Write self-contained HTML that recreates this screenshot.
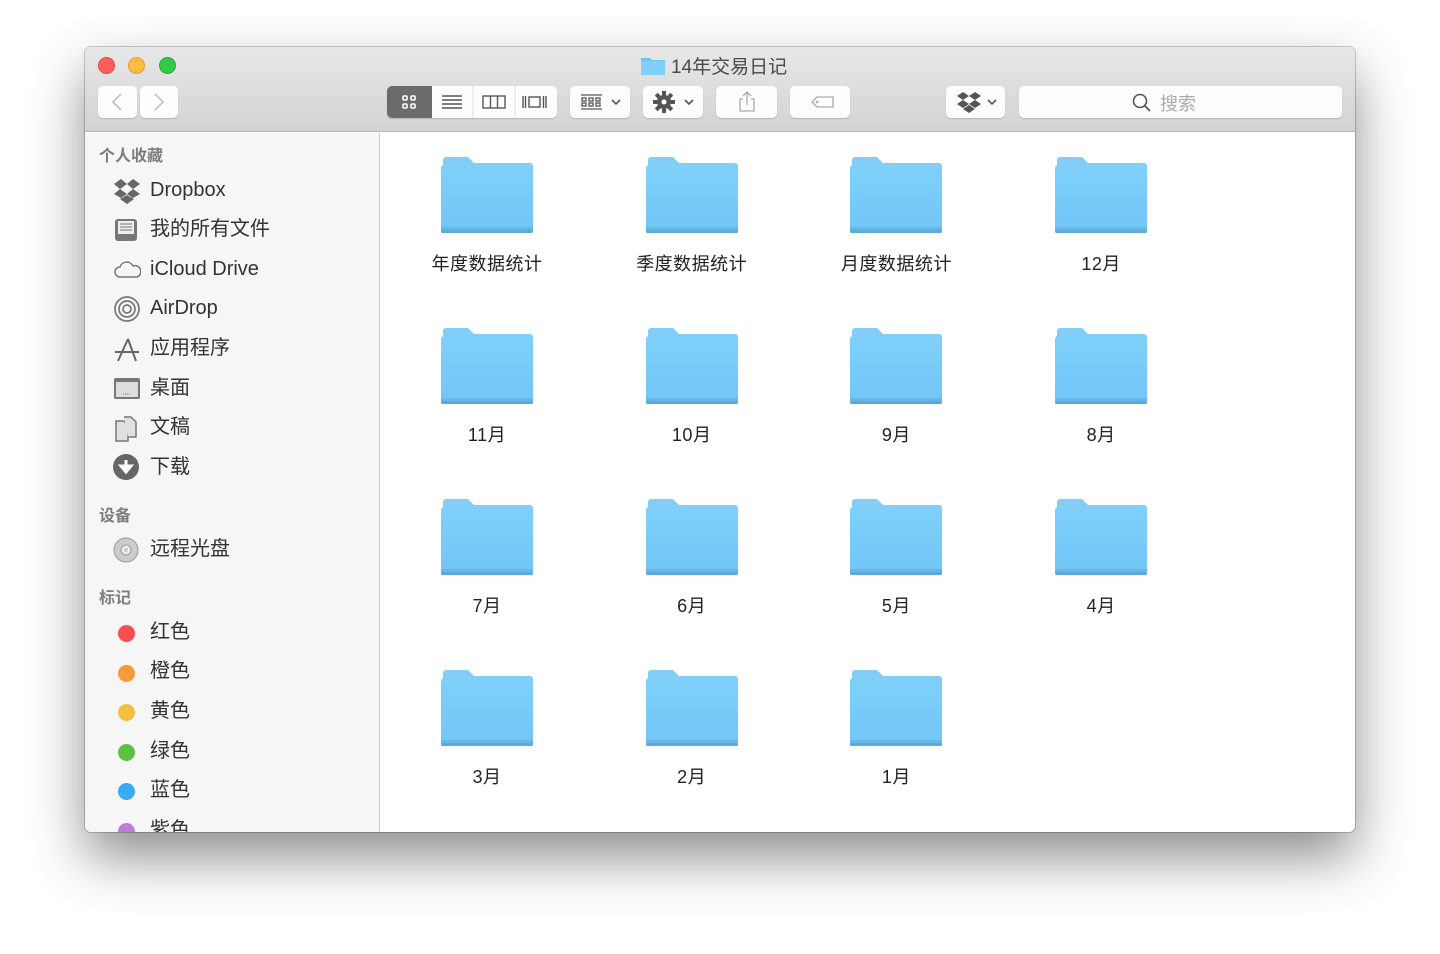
<!DOCTYPE html>
<html><head><meta charset="utf-8"><style>
*{margin:0;padding:0;box-sizing:border-box}
body{width:1440px;height:954px;background:#fff;position:relative;overflow:hidden;font-family:"Liberation Sans","Noto Sans CJK SC",sans-serif}
.win{position:absolute;left:85px;top:47px;width:1270px;height:785px;border-radius:6px;overflow:hidden;box-shadow:0 25px 55px rgba(0,0,0,.45),0 0 0 1px rgba(0,0,0,.2);background:#fff}
.tb{position:absolute;left:0;top:0;width:1270px;height:85px;background:linear-gradient(#e9e8e9,#d3d2d3);border-bottom:1px solid #b5b5b5}
.dot{position:absolute;top:10px;width:17px;height:17px;border-radius:50%}
.btn{position:absolute;top:39px;height:32px;background:#fdfdfd;border-radius:5px;box-shadow:0 1px 1px rgba(0,0,0,.15)}
.side{position:absolute;left:0;top:86px;width:295px;height:699px;background:#f6f6f6;border-right:1px solid #c9c9c9}
.h{position:absolute;left:14px;font-size:16px;color:#7d7d7d;font-weight:bold}
.it{position:absolute;left:65px;font-size:20px;color:#333;line-height:24px}
.ic{position:absolute;left:28px}
.tag{position:absolute;left:33px;width:17px;height:17px;border-radius:50%}
.f{position:absolute;width:92px;height:76px}
.lb{position:absolute;width:200px;text-align:center;font-size:18px;color:#222;letter-spacing:.5px}
</style></head><body>
<div class="win">
<div class="tb">
<div class="dot" style="left:13px;background:#fc605c;border:1px solid #de4a45"></div>
<div class="dot" style="left:43px;background:#fdbc40;border:1px solid #dea035"></div>
<div class="dot" style="left:74px;background:#34c84a;border:1px solid #27a93a"></div>
<div style="position:absolute;left:556px;top:5px;font-size:19px;color:#4a4a4a;display:flex;align-items:center">
<svg width="24" height="19" viewBox="0 0 24 19"><path d="M0 2h9l2 2h13v15H0z" fill="#6cc6f4"/><rect y="5" width="24" height="14" fill="#7fcffa"/></svg><span style="margin-left:6px">14年交易日记</span></div>
<div class="btn" style="left:13px;width:39px"><svg width="39" height="32"><path d="M23 8l-8 8 8 8" stroke="#b9b9b9" stroke-width="1.5" fill="none"/></svg></div>
<div class="btn" style="left:55px;width:38px"><svg width="38" height="32"><path d="M15 8l8 8-8 8" stroke="#b9b9b9" stroke-width="1.5" fill="none"/></svg></div>
<div class="btn" style="left:302px;width:170px;overflow:hidden">
<div style="position:absolute;left:0;top:0;width:45px;height:32px;background:#6b6b6b"></div>
<svg width="170" height="32" style="position:absolute;left:0;top:0">
<g fill="none" stroke="#fff" stroke-width="1.6"><rect x="16" y="10" width="4" height="4" rx="1"/><rect x="24" y="10" width="4" height="4" rx="1"/><rect x="16" y="18" width="4" height="4" rx="1"/><rect x="24" y="18" width="4" height="4" rx="1"/></g>
<g stroke="#555" stroke-width="1.4"><path d="M55 10h20M55 14h20M55 18h20M55 22h20"/><rect x="96" y="10" width="22" height="12" fill="none"/><path d="M103.5 10v12M110.5 10v12"/><rect x="142" y="11" width="11" height="10" fill="none"/><path d="M136 10v12M138.5 10v12M156.5 10v12M159 10v12"/></g>
<path d="M86 0v32M128 0v32" stroke="#ddd"/></svg></div>
<div class="btn" style="left:485px;width:60px"><svg width="60" height="32"><g stroke="#555" stroke-width="1.3" fill="none"><path d="M11 9h21M11 23h21"/><rect x="12" y="12" width="4" height="3"/><rect x="19" y="12" width="4" height="3"/><rect x="26" y="12" width="4" height="3"/><rect x="12" y="17" width="4" height="3"/><rect x="19" y="17" width="4" height="3"/><rect x="26" y="17" width="4" height="3"/><path d="M42 14l4 4 4-4" stroke-width="1.6"/></g></svg></div>
<div class="btn" style="left:558px;width:60px"><svg width="60" height="32"><g transform="translate(21 16)" fill="#555"><circle r="7"/><g id="t"><rect x="-2" y="-11" width="4" height="22"/></g><use href="#t" transform="rotate(45)"/><use href="#t" transform="rotate(90)"/><use href="#t" transform="rotate(135)"/><circle r="2.5" fill="#fff"/></g><path d="M42 14l4 4 4-4" stroke="#555" stroke-width="1.6" fill="none"/></svg></div>
<div class="btn" style="left:631px;width:61px"><svg width="61" height="32"><g stroke="#aaa" stroke-width="1.3" fill="none"><path d="M27 13h-3v12h14V13h-3M31 6v13M27 10l4-4 4 4"/></g></svg></div>
<div class="btn" style="left:705px;width:60px"><svg width="60" height="32"><path d="M22 16l5-5h16v10H27z" stroke="#aaa" stroke-width="1.3" fill="none"/><circle cx="27" cy="16" r="1.3" fill="#aaa"/></svg></div>
<div class="btn" style="left:861px;width:59px"><svg width="59" height="32"><g fill="#555"><path d="M11 10l6-4 6 4-6 4zM23 10l6-4 6 4-6 4zM11 18l6-4 6 4-6 4zM23 18l6-4 6 4-6 4zM17 23l6-4 6 4-6 4z"/></g><path d="M42 14l4 4 4-4" stroke="#555" stroke-width="1.6" fill="none"/></svg></div>
<div class="btn" style="left:934px;width:323px"><svg width="22" height="22" style="position:absolute;left:112px;top:6px"><circle cx="9" cy="9" r="6.5" stroke="#555" stroke-width="1.6" fill="none"/><path d="M14 14l5 5" stroke="#555" stroke-width="1.8"/></svg><span style="position:absolute;left:141px;top:4px;font-size:18px;color:#aaa">搜索</span></div>
</div>
<div class="side">
<div class="h" style="top:9px">个人收藏</div>
<svg class="ic" style="top:45px" width="28" height="26" viewBox="0 0 28 26"><g fill="#666"><path d="M1 6l7-5 6 5-7 5zM14 6l6-5 7 5-7 5zM1 16l6-5 7 5-6 4zM14 16l6-5 7 5-7 4zM7 21l7-4 7 4-7 5z"/></g></svg>
<div class="it" style="top:45px">Dropbox</div>
<svg class="ic" style="top:84px" width="26" height="26"><rect x="2" y="2" width="22" height="22" rx="3" fill="#777"/><rect x="5" y="4" width="16" height="13" fill="#eee"/><path d="M7 7h12M7 10h12M7 13h12" stroke="#777"/></svg>
<div class="it" style="top:84px">我的所有文件</div>
<svg class="ic" style="top:126px" width="28" height="20"><path d="M7 18a5 5 0 010-10 7 7 0 0113-1 5 5 0 014 11z" fill="none" stroke="#777" stroke-width="1.5"/></svg>
<div class="it" style="top:124px">iCloud Drive</div>
<svg class="ic" style="top:162px" width="28" height="28"><g fill="none" stroke="#777" stroke-width="1.7"><circle cx="14" cy="14" r="12"/><circle cx="14" cy="14" r="8"/><circle cx="14" cy="14" r="4"/></g></svg>
<div class="it" style="top:163px">AirDrop</div>
<svg class="ic" style="top:202px" width="28" height="28"><g stroke="#666" stroke-width="2" fill="none"><path d="M5 26L15 4M23 26L15 4M2 17h24"/></g></svg>
<div class="it" style="top:203px">应用程序</div>
<svg class="ic" style="top:244px" width="28" height="24"><rect x="1" y="1" width="26" height="21" rx="2" fill="#777"/><rect x="3" y="5" width="22" height="15" fill="#ddd"/><path d="M10 17h8" stroke="#777" stroke-dasharray="1 1"/></svg>
<div class="it" style="top:243px">桌面</div>
<svg class="ic" style="top:282px" width="28" height="28"><path d="M3 6h8l4 4v16H3z" fill="#e0e0e0" stroke="#777" stroke-width="1.5"/><path d="M11 2h7l5 5v15H15" fill="#e0e0e0" stroke="#777" stroke-width="1.5"/></svg>
<div class="it" style="top:282px">文稿</div>
<svg class="ic" style="top:321px" width="28" height="28"><circle cx="13" cy="13" r="13" fill="#666"/><path d="M13 6v10M8 12l5 6 5-6z" stroke="#fff" stroke-width="3" fill="#fff"/></svg>
<div class="it" style="top:322px">下载</div>
<div class="h" style="top:369px">设备</div>
<svg class="ic" style="top:403px" width="28" height="28"><circle cx="13" cy="14" r="12" fill="#ccc" stroke="#999"/><circle cx="13" cy="14" r="5" fill="#eee" stroke="#999"/><circle cx="13" cy="14" r="2" fill="#ccc"/></svg>
<div class="it" style="top:404px">远程光盘</div>
<div class="h" style="top:451px">标记</div>
<div class="tag" style="top:492px;background:#f74e4f"></div><div class="it" style="top:487px">红色</div>
<div class="tag" style="top:532px;background:#f79a3b"></div><div class="it" style="top:526px">橙色</div>
<div class="tag" style="top:571px;background:#f2c03e"></div><div class="it" style="top:566px">黄色</div>
<div class="tag" style="top:611px;background:#5ebf47"></div><div class="it" style="top:606px">绿色</div>
<div class="tag" style="top:650px;background:#3baaf0"></div><div class="it" style="top:645px">蓝色</div>
<div class="tag" style="top:690px;background:#c27ad9"></div><div class="it" style="top:685px">紫色</div>
</div>
</div>
<svg width="0" height="0" style="position:absolute"><defs><linearGradient id="g" x1="0" y1="0" x2="0" y2="1"><stop offset="0" stop-color="#7fd0fb"/><stop offset="1" stop-color="#72c5f6"/></linearGradient>
<symbol id="fold" viewBox="0 0 92 76"><path d="M2 3a3 3 0 013-3h22l6 6h56a3 3 0 013 3v10H2z" fill="#83cdf6"/><rect x="0" y="8" width="92" height="68" rx="3" fill="url(#g)"/><rect x="0" y="70" width="92" height="3" fill="#67b8e8"/><rect x="0" y="73" width="92" height="3" rx="1.5" fill="#5aaad9"/></symbol></defs></svg>
<div id="grid"></div>
<script>
var L=["年度数据统计","季度数据统计","月度数据统计","12月","11月","10月","9月","8月","7月","6月","5月","4月","3月","2月","1月"],h="";
L.forEach(function(t,i){var c=i%4,r=Math.floor(i/4),x=441+c*204.7,y=157+r*171;
h+='<svg class="f" style="left:'+x+'px;top:'+y+'px"><use href="#fold"/></svg><div class="lb" style="left:'+(x-54)+'px;top:'+(y+93)+'px">'+t+'</div>';});
document.getElementById("grid").innerHTML=h;
</script>
</body></html>
